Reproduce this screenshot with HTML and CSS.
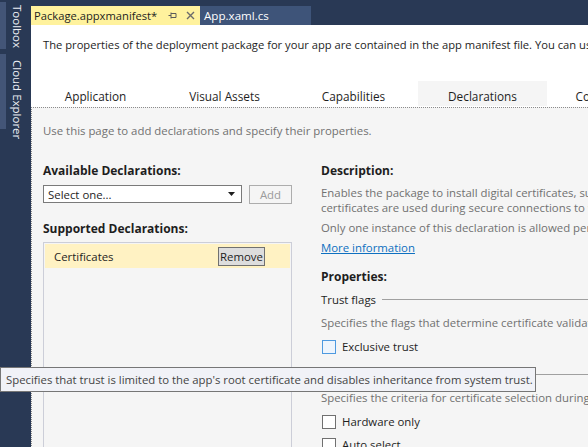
FILE: index.html
```html
<!DOCTYPE html>
<html>
<head>
<meta charset="utf-8">
<link rel="stylesheet" href="styles.css">
</head>
<body>
<div class="app">
  <aside class="sidebar">
    <div class="side-tab side-tab-toolbox"><span class="side-bar"></span><span class="side-label">Toolbox</span></div>
    <div class="side-tab side-tab-cloud"><span class="side-bar"></span><span class="side-label">Cloud Explorer</span></div>
  </aside>
  <main class="main">
    <div class="doc-tabs">
      <div class="doc-tab doc-tab-active">
        <span class="doc-tab-name">Package.appxmanifest*</span>
        <svg class="pin" width="9" height="9" viewBox="0 0 9 9"><path d="M0.5 4.5H3M3 1.5V7.5M3 2.5H8M3 6.5H8M8 2.5V6.5" stroke="#5a5a5a" fill="none" stroke-width="1"/></svg>
        <svg class="close" width="9" height="9" viewBox="0 0 9 9"><path d="M1 1L8 8M8 1L1 8" stroke="#6b6b6b" stroke-width="1.4" fill="none"/></svg>
      </div>
      <div class="doc-tab doc-tab-inactive">App.xaml.cs</div>
    </div>
    <div class="doc-accent"></div>
    <div class="designer">
      <div class="header">
        <p class="intro">The properties of the deployment package for your app are contained in the app manifest file. You can use the Manifest Designer to set or modify one or more of the properties.</p>
        <nav class="page-tabs">
          <span class="page-tab">Application</span>
          <span class="page-tab">Visual Assets</span>
          <span class="page-tab">Capabilities</span>
          <span class="page-tab page-tab-selected">Declarations</span>
          <span class="page-tab">Content URIs</span>
        </nav>
      </div>
      <div class="body">
        <p class="hint">Use this page to add declarations and specify their properties.</p>
        <div class="columns">
          <section class="left-col">
            <h3 class="label">Available Declarations:</h3>
            <div class="select-row">
              <div class="select"><span>Select one...</span><svg width="7" height="4" viewBox="0 0 7 4"><path d="M0 0H7L3.5 4Z" fill="#1e1e1e"/></svg></div>
              <button class="btn-add" disabled>Add</button>
            </div>
            <h3 class="label label-supported">Supported Declarations:</h3>
            <div class="listbox">
              <div class="list-item"><span>Certificates</span><button class="btn-remove">Remove</button></div>
            </div>
          </section>
          <section class="right-col">
            <h3 class="label">Description:</h3>
            <p class="desc desc-first">Enables the package to install digital certificates, such as root certificates and intermediate certificates.<br>certificates are used during secure connections to web services and during the app's lifetime.</p>
            <p class="desc desc-gap">Only one instance of this declaration is allowed per app.</p>
            <a class="link" href="#">More information</a>
            <h3 class="label label-props">Properties:</h3>
            <div class="group-head"><span>Trust flags</span><span class="rule"></span></div>
            <p class="desc group-desc">Specifies the flags that determine certificate validation.</p>
            <label class="check check-hover"><span class="box"></span>Exclusive trust</label>
            <div class="group-head group-head-hidden"><span class="rule"></span></div>
            <p class="desc group-desc2">Specifies the criteria for certificate selection during client authentication.</p>
            <label class="check"><span class="box"></span>Hardware only</label>
            <label class="check check-last"><span class="box"></span>Auto select</label>
          </section>
        </div>
      </div>
    </div>
  </main>
  <div class="tooltip">Specifies that trust is limited to the app's root certificate and disables inheritance from system trust.</div>
</div>
</body>
</html>
```
FILE: styles.css
```css
* { box-sizing: border-box; }
html, body { margin: 0; padding: 0; }
body {
  width: 588px;
  height: 447px;
  overflow: hidden;
  background: #293955;
  font-family: "Open Sans", "Noto Sans", sans-serif;
  font-size: 11.4px;
  color: #1e1e1e;
}
.app { position: relative; display: flex; width: 588px; height: 447px; }

.sidebar { width: 31px; flex: none; background: #293955; padding-top: 2px; display: flex; flex-direction: column; gap: 5px; }
.side-tab { display: flex; }
.side-bar { width: 6px; background: #435577; }
.side-tab-toolbox { height: 47px; }
.side-tab-cloud { height: 75px; }
.side-label {
  writing-mode: vertical-rl;
  white-space: nowrap;
  color: #eef0f5;
  font-size: 11.5px;
  padding-left: 4px;
  padding-top: 3px;
  line-height: 14px;
}
.side-tab-cloud .side-label { padding-top: 6px; }

.main { flex: 1; display: flex; flex-direction: column; min-width: 0; overflow: hidden; }
.doc-tabs { height: 25px; padding-top: 6px; display: flex; background: #293955; }
.doc-tab { height: 19px; display: flex; align-items: center; font-size: 11.2px; white-space: nowrap; }
.doc-tab-active { background: #fff29d; color: #1e1e1e; padding-left: 3px; width: 169px; }
.doc-tab-name { width: 134px; }
.pin { margin-left: 0; }
.close { margin-left: 9px; }
.doc-tab-inactive { background: #3e5479; color: #ffffff; width: 111px; padding-left: 4px; font-size: 11.6px; }
.doc-accent { height: 2px; background: #fff29d; }

.designer { flex: 1; display: flex; flex-direction: column; background: #f5f5f5; }
.header { background: #ffffff; height: 82px; display: flex; flex-direction: column; }
.intro { margin: 12px 0 0 12px; white-space: nowrap; line-height: 15px; font-size: 11.2px; }
.page-tabs { margin-top: 29px; display: flex; height: 25px; }
.page-tab { flex: none; width: 129px; display: flex; align-items: center; justify-content: center; height: 25px; padding-top: 4px; white-space: nowrap; font-size: 11.8px; }
.page-tab-selected { background: #f5f5f5; }

.body { flex: 1; border-top: 1px dotted #8c8c8c; border-left: 1px dotted #8c8c8c; padding-left: 11px; }
.hint { margin: 15px 0 0 0; color: #717171; line-height: 15px; white-space: nowrap; }
.columns { display: flex; gap: 29px; margin-top: 25px; }
.left-col { width: 249px; flex: none; }
.right-col { flex: 1; min-width: 0; white-space: nowrap; }
.label { margin: 0; font-size: 12px; font-weight: 700; line-height: 16px; }
.select-row { display: flex; gap: 7px; margin-top: 6px; }
.select { width: 199px; height: 18px; background: #fff; border: 1px solid #7a7a7a; display: flex; align-items: center; justify-content: space-between; padding: 0 6px 0 4px; }
.btn-add { width: 43px; height: 19px; border: 1px solid #adadad; background: #f5f5f5; color: #9b9b9b; font: inherit; padding: 0; }
.label-supported { margin-top: 17px; }
.listbox { margin-top: 5px; border: 1px solid #ccced8; border-bottom: none; height: 210px; padding: 1px; }
.list-item { height: 24px; background: #fff2c3; display: flex; align-items: center; justify-content: space-between; padding: 0 25px 0 9px; }
.btn-remove { height: 19px; width: 47px; border: 1px solid #707070; background: #dddddd; font: inherit; color: #1e1e1e; padding: 0; }

.desc { margin: 0; color: #717171; line-height: 15px; }
.desc-first { margin-top: 6px; }
.desc-gap { margin-top: 5px; }
.link { display: block; margin-top: 5px; color: #0e70c0; text-decoration: underline; line-height: 15px; }
.label-props { margin-top: 14px; }
.group-head { display: flex; align-items: center; gap: 6px; margin-top: 6px; height: 16px; }
.rule { flex: 1; height: 1px; background: #a0a0a0; }
.group-desc { margin-top: 8px; }
.check { display: flex; align-items: center; gap: 6px; margin-top: 9px; height: 15px; }
.box { width: 14px; height: 14px; border: 1px solid #707070; background: #fff; margin-left: 1px; }
.check-hover .box { border-color: #4e9ae0; background: #eef5fd; }
.group-head-hidden { margin-top: 12px; }
.group-desc2 { margin-top: 8px; }
.check-last { margin-top: 8px; }

.tooltip {
  position: absolute;
  left: 0;
  top: 367px;
  width: 536px;
  height: 25px;
  background: #f1f2f7;
  border: 1px solid #767676;
  color: #444444;
  padding: 0 0 0 5px;
  line-height: 23px;
  white-space: nowrap;
  font-size: 11.35px;
}
```
